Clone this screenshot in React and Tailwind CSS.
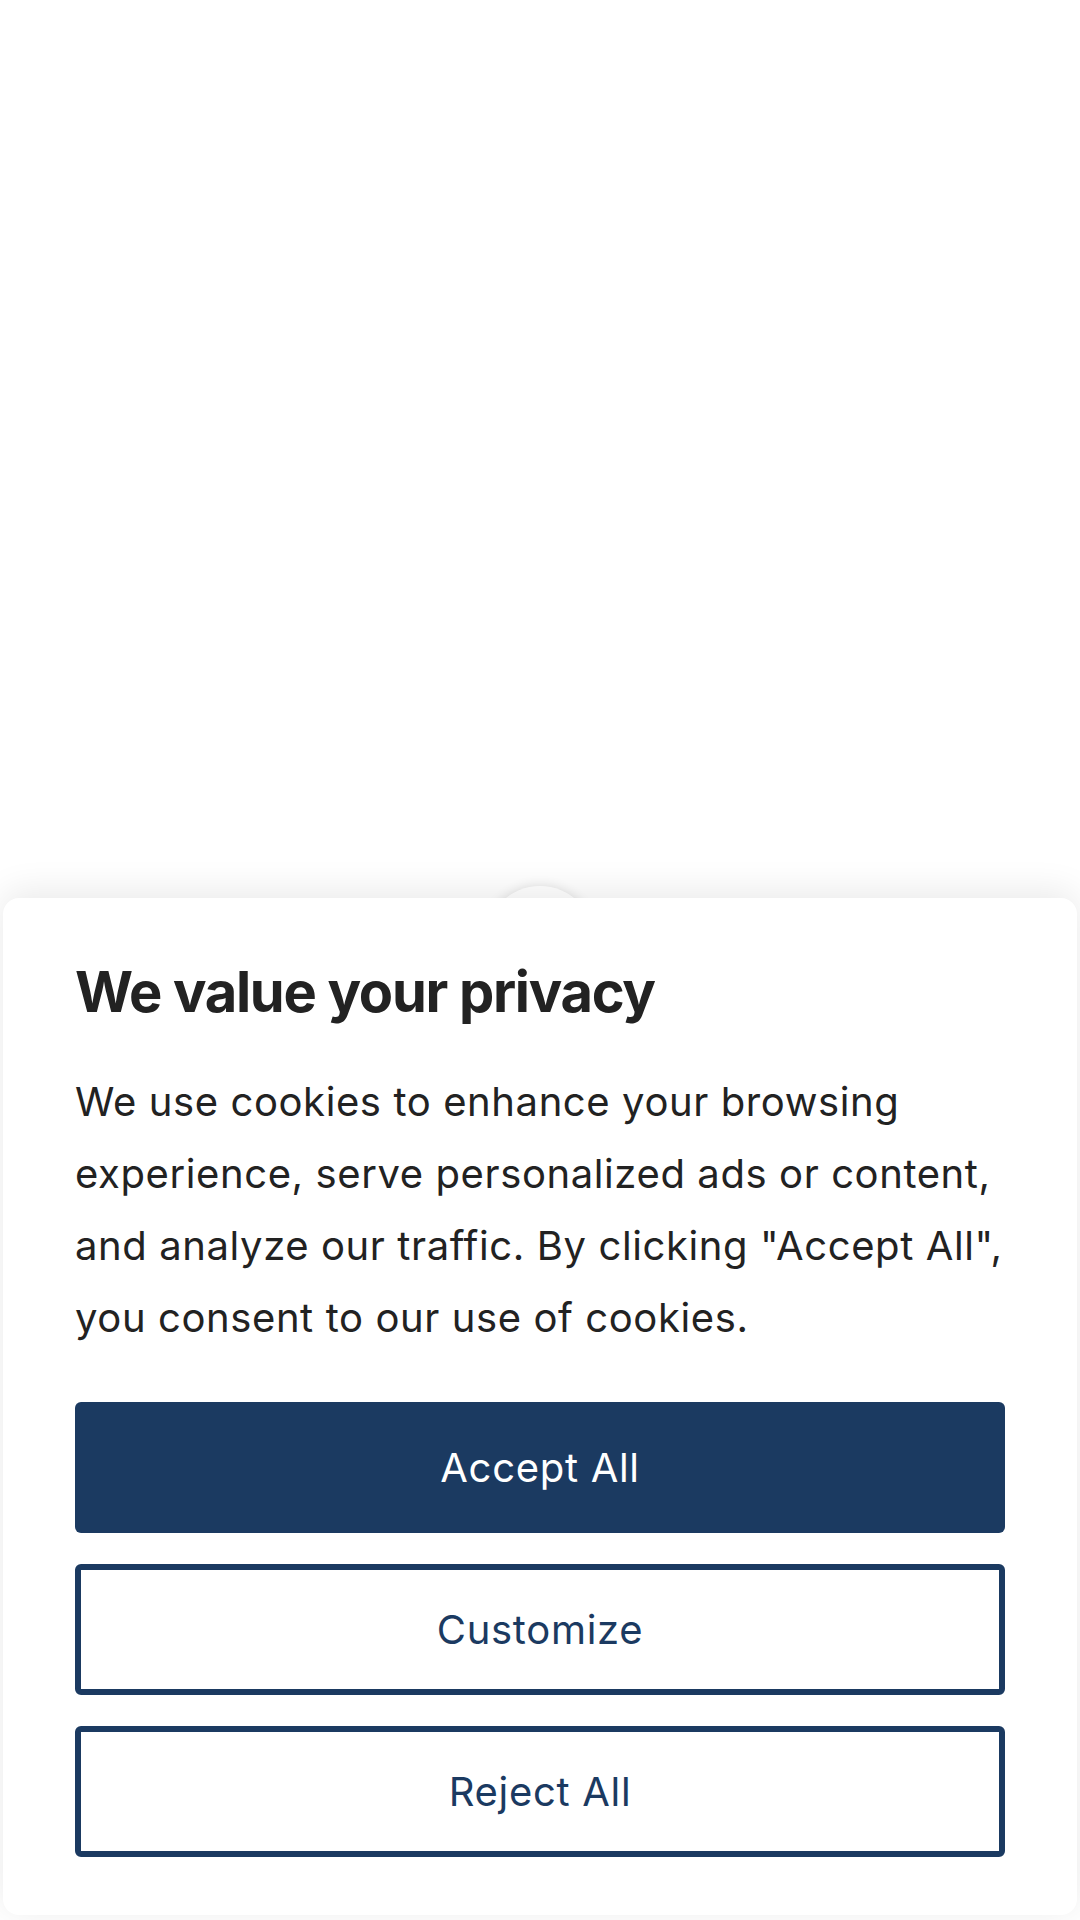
import React from "react";

export default function App() {
  return (
    <div
      className="h-[1920px] w-full bg-white flex flex-col justify-end px-[3px] pb-[5px]"
      style={{ fontFamily: "Inter, 'Noto Sans', sans-serif" }}
    >
      <div className="relative">
        <div className="absolute left-1/2 -translate-x-1/2 -top-[12px] w-[110px] h-[110px] rounded-full bg-white shadow-[0_0_12px_rgba(0,0,0,0.12)]" />
        <div className="relative rounded-2xl bg-white shadow-[0_-6px_36px_rgba(0,0,0,0.09)] px-[72px] pt-[61px] pb-[58px]">
          <h1 className="text-[56px] leading-[1.2] font-bold text-[#222] tracking-[-1.3px]">
            We value your privacy
          </h1>
          <p className="mt-[40px] text-[40px] leading-[72px] text-[#222] tracking-[0.6px] whitespace-nowrap">
            We use cookies to enhance your browsing
            <br />
            experience, serve personalized ads or content,
            <br />
            and analyze our traffic. By clicking "Accept All",
            <br />
            you consent to our use of cookies.
          </p>
          <div className="mt-[48px] flex flex-col gap-[31px]">
            <button className="h-[131px] w-full rounded-md bg-[#1b3a61] text-white text-[40px] tracking-[0.7px]">
              Accept All
            </button>
            <button className="h-[131px] w-full rounded-md border-[6px] border-[#1b3a61] bg-white text-[#1b3a61] text-[40px] tracking-[0.7px]">
              Customize
            </button>
            <button className="h-[131px] w-full rounded-md border-[6px] border-[#1b3a61] bg-white text-[#1b3a61] text-[40px] tracking-[0.7px]">
              Reject All
            </button>
          </div>
        </div>
      </div>
    </div>
  );
}
